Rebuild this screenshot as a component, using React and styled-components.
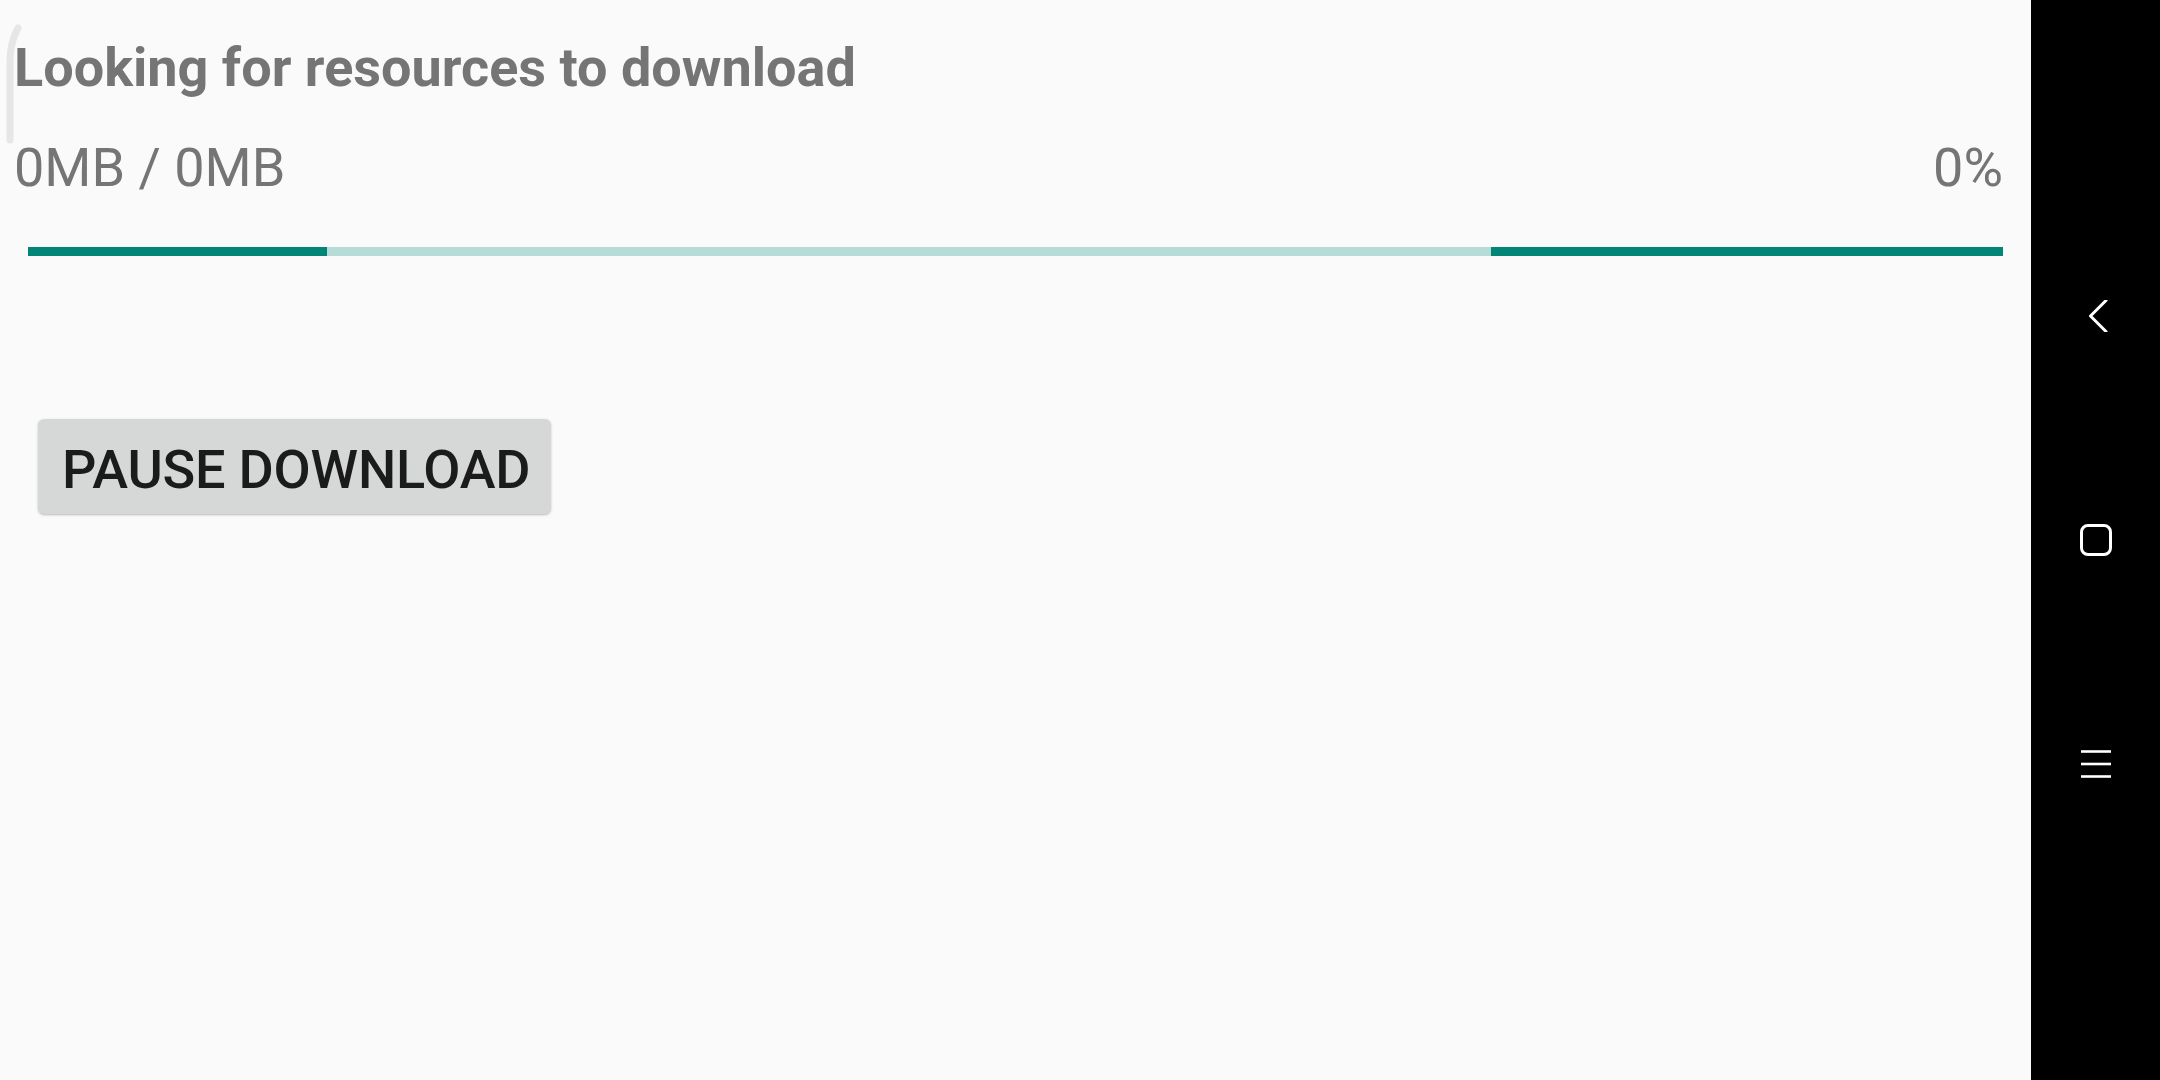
import React from "react";
import styled, { createGlobalStyle } from "styled-components";

const Global = createGlobalStyle`
  html, body { margin: 0; padding: 0; background: #fafafa; }
  body { font-family: Roboto, "Noto Sans", "Liberation Sans", sans-serif; }
  #root { width: 2160px; height: 1080px; }
`;

const Screen = styled.div`
  display: flex;
  width: 2160px;
  height: 1080px;
  overflow: hidden;
`;

const Main = styled.main`
  position: relative;
  flex: 1;
  display: flex;
  flex-direction: column;
  padding: 36px 28px 0 14px;
  background: #fafafa;
`;

const Heading = styled.h1`
  margin: 0;
  font-size: 54px;
  line-height: 64px;
  font-weight: 700;
  color: #757575;
`;

const StatsRow = styled.div`
  display: flex;
  justify-content: space-between;
  margin-top: 36px;
  font-size: 54px;
  line-height: 64px;
  font-weight: 400;
  color: #757575;
`;

const Progress = styled.div`
  position: relative;
  margin: 47px 0 0 14px;
  height: 9px;
  background: #b6dcd8;
  overflow: hidden;
`;

const Segment = styled.div`
  position: absolute;
  top: 0;
  bottom: 0;
  left: ${(p) => p.$left}%;
  width: ${(p) => p.$width}%;
  background: #008577;
`;

const Actions = styled.div`
  display: flex;
  margin: 163px 0 0 24px;
`;

const Button = styled.button`
  display: flex;
  align-items: flex-start;
  height: 95px;
  padding: 19px 21px 0 24px;
  border: none;
  border-radius: 6px;
  background: #d6d7d7;
  box-shadow: 0 1px 3px rgba(0, 0, 0, 0.18), 0 1px 1px rgba(0, 0, 0, 0.08);
  font-family: Roboto, "Noto Sans", "Liberation Sans", sans-serif;
  font-size: 54px;
  line-height: 64px;
  font-weight: 500;
  letter-spacing: -0.2px;
  color: #1b1b1b;
  text-transform: uppercase;
  cursor: pointer;
`;

const EdgeGlow = styled.svg`
  position: absolute;
  left: 0;
  top: 0;
  width: 30px;
  height: 160px;
  pointer-events: none;
`;

const NavBar = styled.nav`
  width: 129px;
  flex: none;
  background: #000;
  display: flex;
  flex-direction: column;
  align-items: center;
  justify-content: center;
  gap: 192px;
`;

const NavIcon = styled.svg`
  width: 32px;
  height: 32px;
  display: block;
`;

export default function App() {
  return (
    <>
      <Global />
      <Screen>
        <Main>
          <EdgeGlow viewBox="0 0 30 160">
            <path
              d="M18 28 Q10 42 10 62 L10 140"
              fill="none"
              stroke="#e6e6e6"
              strokeWidth="7"
              strokeLinecap="round"
            />
          </EdgeGlow>
          <Heading>Looking for resources to download</Heading>
          <StatsRow>
            <span>0MB / 0MB</span>
            <span>0%</span>
          </StatsRow>
          <Progress>
            <Segment $left={0} $width={15.15} />
            <Segment $left={74.1} $width={25.9} />
          </Progress>
          <Actions>
            <Button>Pause download</Button>
          </Actions>
        </Main>
        <NavBar>
          <NavIcon viewBox="0 0 32 32">
            <polyline
              points="26,0.5 10.5,16 26,31.5"
              fill="none"
              stroke="#fff"
              strokeWidth="3"
              strokeLinecap="round"
              strokeLinejoin="round"
            />
          </NavIcon>
          <NavIcon viewBox="0 0 32 32">
            <rect
              x="1.5"
              y="1.5"
              width="29"
              height="29"
              rx="6.5"
              fill="none"
              stroke="#fff"
              strokeWidth="3"
            />
          </NavIcon>
          <NavIcon viewBox="0 0 32 32">
            <g stroke="#fff" strokeWidth="2.6" strokeLinecap="butt">
              <line x1="1" y1="3.5" x2="31" y2="3.5" />
              <line x1="1" y1="16" x2="31" y2="16" />
              <line x1="1" y1="28.5" x2="31" y2="28.5" />
            </g>
          </NavIcon>
        </NavBar>
      </Screen>
    </>
  );
}
